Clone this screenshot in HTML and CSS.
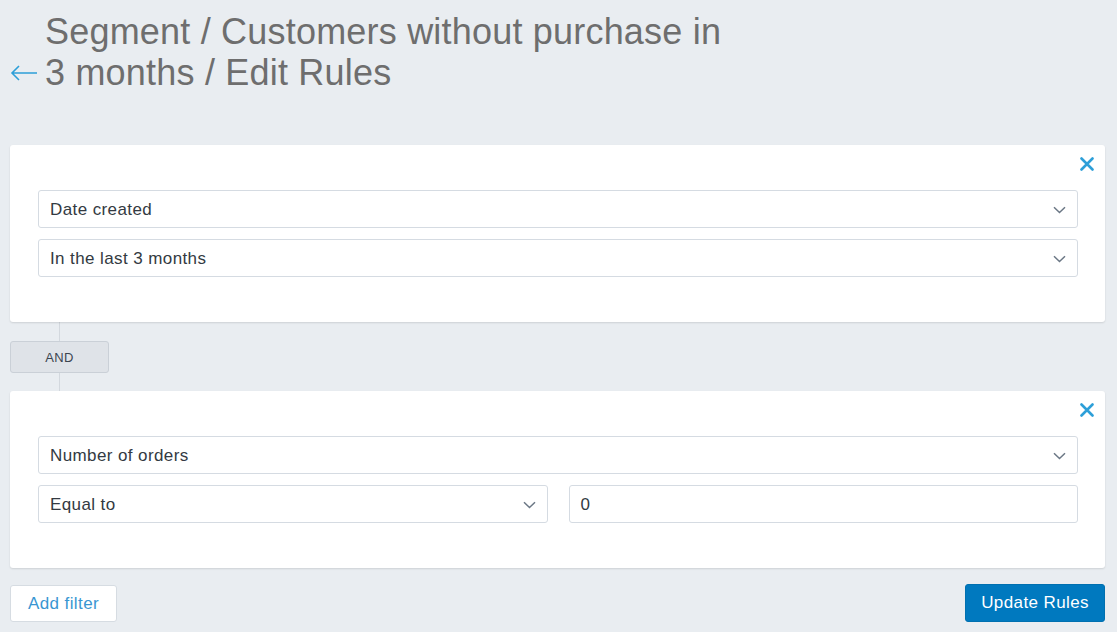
FILE: index.html
```html
<!DOCTYPE html>
<html>
<head>
<meta charset="utf-8">
<link rel="stylesheet" href="styles.css">
</head>
<body>
<div class="page">
  <header class="header">
    <a class="back" href="#"><svg width="28" height="16" viewBox="0 0 28 16"><path d="M27 8H2M9 1L2 8l7 7" fill="none" stroke="#2d9fd8" stroke-width="1.6"/></svg></a>
    <h1 class="title">Segment / Customers without purchase in 3 months / Edit Rules</h1>
  </header>

  <section class="card">
    <button class="close"><svg width="14" height="14" viewBox="0 0 14 14"><path d="M1.5 1.5l11 11M12.5 1.5l-11 11" stroke="#2d9fd8" stroke-width="2.6" stroke-linecap="round"/></svg></button>
    <div class="select"><span>Date created</span><svg class="chev" width="13" height="8" viewBox="0 0 13 8"><path d="M1 1.2l5.5 5.3L12 1.2" fill="none" stroke="#6b7785" stroke-width="1.5"/></svg></div>
    <div class="select"><span>In the last 3 months</span><svg class="chev" width="13" height="8" viewBox="0 0 13 8"><path d="M1 1.2l5.5 5.3L12 1.2" fill="none" stroke="#6b7785" stroke-width="1.5"/></svg></div>
  </section>

  <div class="connector">
    <div class="line"></div>
    <div class="and">AND</div>
    <div class="line line-bottom"></div>
  </div>

  <section class="card">
    <button class="close"><svg width="14" height="14" viewBox="0 0 14 14"><path d="M1.5 1.5l11 11M12.5 1.5l-11 11" stroke="#2d9fd8" stroke-width="2.6" stroke-linecap="round"/></svg></button>
    <div class="select"><span>Number of orders</span><svg class="chev" width="13" height="8" viewBox="0 0 13 8"><path d="M1 1.2l5.5 5.3L12 1.2" fill="none" stroke="#6b7785" stroke-width="1.5"/></svg></div>
    <div class="row">
      <div class="select"><span>Equal to</span><svg class="chev" width="13" height="8" viewBox="0 0 13 8"><path d="M1 1.2l5.5 5.3L12 1.2" fill="none" stroke="#6b7785" stroke-width="1.5"/></svg></div>
      <div class="select input"><span>0</span></div>
    </div>
  </section>

  <footer class="actions">
    <button class="btn btn-secondary">Add filter</button>
    <button class="btn btn-primary">Update Rules</button>
  </footer>
</div>
</body>
</html>
```

FILE: styles.css
```css
* { box-sizing: border-box; }
html, body { margin: 0; padding: 0; }
body {
  background: #e9edf1;
  font-family: "Liberation Sans", Arial, sans-serif;
  color: #333;
  width: 1117px;
  height: 632px;
  overflow: hidden;
}
.page {
  padding: 0 12px 0 10px;
}
.header {
  display: flex;
  align-items: flex-end;
  padding-top: 9px;
  height: 145px;
  padding-bottom: 52px;
}
.back {
  display: flex;
  width: 35px;
  height: 22px;
  align-items: center;
  margin-bottom: 9px;
}
.title {
  margin: 0;
  font-weight: normal;
  font-size: 36px;
  line-height: 41px;
  color: #6e6e6e;
  max-width: 700px;
  letter-spacing: 0.2px;
}
.card {
  position: relative;
  background: #fff;
  border-radius: 3px;
  box-shadow: 0 1px 2px rgba(0,0,0,0.12);
  padding: 45px 27px 45px 28px;
  display: flex;
  flex-direction: column;
  gap: 11px;
}
.close {
  position: absolute;
  top: 12px;
  right: 11px;
  border: 0;
  background: none;
  padding: 0;
  width: 14px;
  height: 14px;
  display: flex;
  cursor: pointer;
}
.select {
  height: 38px;
  border: 1px solid #d5dbe2;
  border-radius: 3px;
  background: #fff;
  display: flex;
  align-items: center;
  justify-content: space-between;
  padding: 1px 11px 0 11px;
  font-size: 17px;
  letter-spacing: 0.4px;
  color: #333a42;
}
.chev { flex: none; }
.row {
  display: grid;
  grid-template-columns: 1fr 1fr;
  gap: 21px;
}
.connector {
  display: flex;
  flex-direction: column;
  align-items: flex-start;
}
.line {
  width: 1px;
  height: 19px;
  background: #d3d8de;
  margin-left: 49px;
}
.line-bottom { height: 18px; }
.and {
  width: 99px;
  height: 32px;
  background: #dfe3e8;
  border: 1px solid #cad0d7;
  border-radius: 3px;
  display: flex;
  align-items: center;
  justify-content: center;
  font-size: 13px;
  color: #3c4550;
  letter-spacing: 0.3px;
}
.actions {
  display: flex;
  justify-content: space-between;
  align-items: flex-end;
  margin-top: 16px;
}
.btn {
  font-family: "Liberation Sans", Arial, sans-serif;
  font-size: 17px;
  letter-spacing: 0.4px;
  height: 38px;
  border-radius: 3px;
  padding: 0 17px;
  cursor: pointer;
}
.btn-secondary {
  background: #fff;
  border: 1px solid #d6dce2;
  color: #3996d2;
  height: 37px;
}
.btn-primary {
  background: #0079bf;
  border: 1px solid #0070b0;
  color: #fff;
  padding: 0 15px;
}
```
